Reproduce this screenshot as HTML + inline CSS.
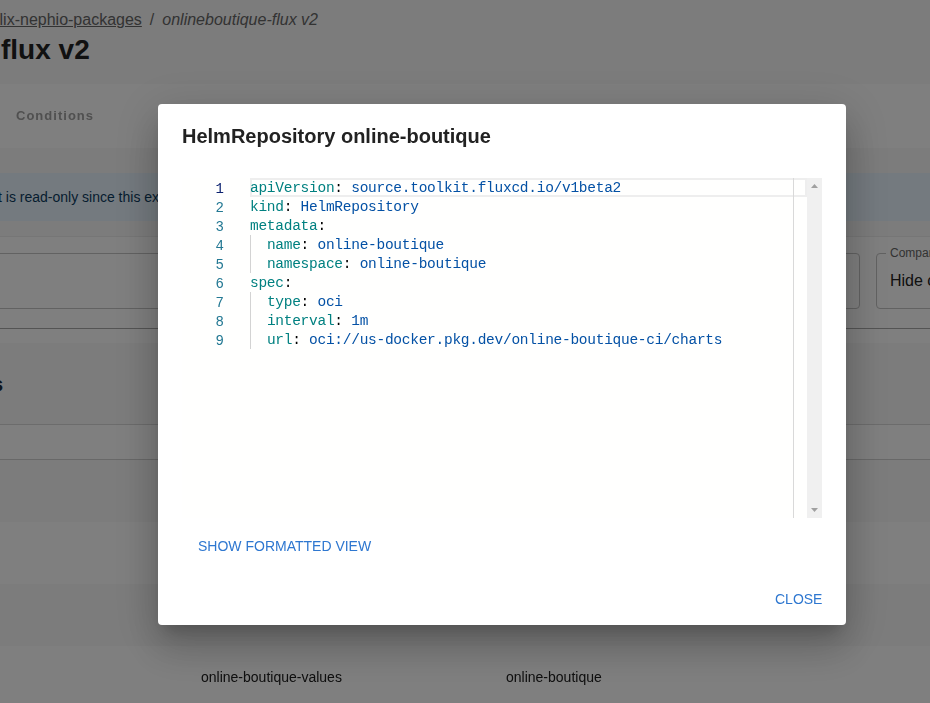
<!DOCTYPE html>
<html><head><meta charset="utf-8">
<style>
html,body{margin:0;padding:0;width:930px;height:703px;overflow:hidden;font-family:"Liberation Sans",sans-serif;}
body{background:#f8f8f8;position:relative;}
.a{position:absolute;white-space:nowrap;}
#overlay{position:absolute;left:0;top:0;width:930px;height:703px;background:rgba(0,0,0,0.5);}
#dlg{position:absolute;left:158px;top:104px;width:688px;height:521px;background:#fff;border-radius:4px;
 box-shadow:0px 11px 15px -7px rgba(0,0,0,0.2),0px 24px 38px 3px rgba(0,0,0,0.14),0px 9px 46px 8px rgba(0,0,0,0.12);}
.title{will-change:transform;left:24px;top:21px;font-size:20px;font-weight:700;color:#222;letter-spacing:0px;}
#ed{position:absolute;left:24px;top:74px;width:640px;height:340px;background:#fffffe;overflow:hidden;}
.ln{position:absolute;left:1px;margin-top:2px;width:41px;text-align:right;font-family:"Liberation Mono",monospace;font-size:14px;color:#237893;height:19px;line-height:19px;}
.cl{position:absolute;left:68px;margin-top:1px;letter-spacing:-0.27px;font-family:"Liberation Mono",monospace;font-size:14.5px;height:19px;line-height:19px;white-space:pre;color:#000;}
.k{color:#008080}.v{color:#0451a5}
.btn{font-size:14px;color:#2e77d0;text-transform:uppercase;letter-spacing:0px;will-change:transform;}
</style></head><body>
<!-- background page -->
<div class="a" style="left:0;top:0;width:930px;height:84px;background:#f8f8f8"></div>
<div class="a" style="left:-4px;top:11px;font-size:16px;color:#666;"><span style="text-decoration:underline">llix-nephio-packages</span><span style="margin:0 8px">/</span><i>onlineboutique-flux v2</i></div>
<div class="a" style="left:1px;top:34px;font-size:28px;font-weight:700;color:#222;">flux v2</div>
<div class="a" style="left:0;top:84px;width:930px;height:64px;background:#fff"></div>
<div class="a" style="left:16.4px;top:108px;font-size:13px;font-weight:700;color:#a0a0a0;letter-spacing:1.02px;will-change:transform;">Conditions</div>
<div class="a" style="left:0;top:173px;width:930px;height:48px;background:rgb(233,245,254)"></div>
<div class="a" style="left:-2px;top:189px;font-size:14px;color:rgb(13,60,97);">t is read-only since this external package</div>
<div class="a" style="left:0;top:236px;width:930px;height:1px;background:#ececec"></div>
<div class="a" style="left:0;top:237px;width:930px;height:106px;background:#fff"></div>
<div class="a" style="left:-20px;top:253px;width:878px;height:54px;border:1px solid #c4c4c4;border-radius:4px;"></div>
<div class="a" style="left:876px;top:253px;width:100px;height:54px;border:1px solid #c4c4c4;border-radius:4px;"></div>
<div class="a" style="left:886px;top:246px;font-size:12px;color:#666;background:#fff;padding:0 4px;">Compare</div>
<div class="a" style="left:890px;top:272px;font-size:16px;color:#222;">Hide c</div>
<div class="a" style="left:0;top:328px;width:930px;height:1px;background:#a8a8a8"></div>
<div class="a" style="left:-8px;top:373px;font-size:20px;font-weight:700;color:#1a2a3a;">s</div>
<div class="a" style="left:0;top:424px;width:930px;height:36px;background:#fff"></div>
<div class="a" style="left:0;top:424px;width:930px;height:1px;background:#d8d8d8"></div>
<div class="a" style="left:0;top:459px;width:930px;height:1px;background:#d0d0d0"></div>
<div class="a" style="left:0;top:522px;width:930px;height:62px;background:#fff"></div>
<div class="a" style="left:0;top:646px;width:930px;height:62px;background:#fff"></div>
<div class="a" style="left:201px;top:669px;font-size:14px;color:#222;">online-boutique-values</div>
<div class="a" style="left:506px;top:669px;font-size:14px;color:#222;">online-boutique</div>

<div id="overlay"></div>

<div id="dlg">
  <div class="a title">HelmRepository online-boutique</div>
  <div id="ed">
    <!-- current line box -->
    <div class="a" style="left:68px;top:0;width:557px;height:19px;box-sizing:border-box;border:2px solid #eee;"></div>
    <div class="ln" style="top:0;color:#0b216f">1</div>
    <div class="ln" style="top:19px">2</div>
    <div class="ln" style="top:38px">3</div>
    <div class="ln" style="top:57px">4</div>
    <div class="ln" style="top:76px">5</div>
    <div class="ln" style="top:95px">6</div>
    <div class="ln" style="top:114px">7</div>
    <div class="ln" style="top:133px">8</div>
    <div class="ln" style="top:152px">9</div>
    <div class="a" style="left:68px;top:57px;width:1px;height:38px;background:#d3d3d3"></div>
    <div class="a" style="left:68px;top:114px;width:1px;height:57px;background:#d3d3d3"></div>
    <div class="cl" style="top:0"><span class="k">apiVersion</span>: <span class="v">source.toolkit.fluxcd.io/v1beta2</span></div>
    <div class="cl" style="top:19px"><span class="k">kind</span>: <span class="v">HelmRepository</span></div>
    <div class="cl" style="top:38px"><span class="k">metadata</span>:</div>
    <div class="cl" style="top:57px">  <span class="k">name</span>: <span class="v">online-boutique</span></div>
    <div class="cl" style="top:76px">  <span class="k">namespace</span>: <span class="v">online-boutique</span></div>
    <div class="cl" style="top:95px"><span class="k">spec</span>:</div>
    <div class="cl" style="top:114px">  <span class="k">type</span>: <span class="v">oci</span></div>
    <div class="cl" style="top:133px">  <span class="k">interval</span>: <span class="v">1m</span></div>
    <div class="cl" style="top:152px">  <span class="k">url</span>: <span class="v">oci://us-docker.pkg.dev/online-boutique-ci/charts</span></div>
    <div class="a" style="left:611px;top:0;width:1px;height:340px;background:#d9d9d9"></div>
    <div class="a" style="left:625px;top:0;width:15px;height:340px;background:#f0f0f0"></div>
    <svg class="a" style="left:629px;top:6px" width="7" height="5"><polygon points="0,4 3.5,0 7,4" fill="#a0a0a0"/></svg>
    <svg class="a" style="left:629px;top:330px" width="7" height="5"><polygon points="0,0 7,0 3.5,4" fill="#a0a0a0"/></svg>
  </div>
  <div class="a btn" style="left:40px;top:434px;">Show formatted view</div>
  <div class="a btn" style="left:617px;top:487px;">Close</div>
</div>
</body></html>
